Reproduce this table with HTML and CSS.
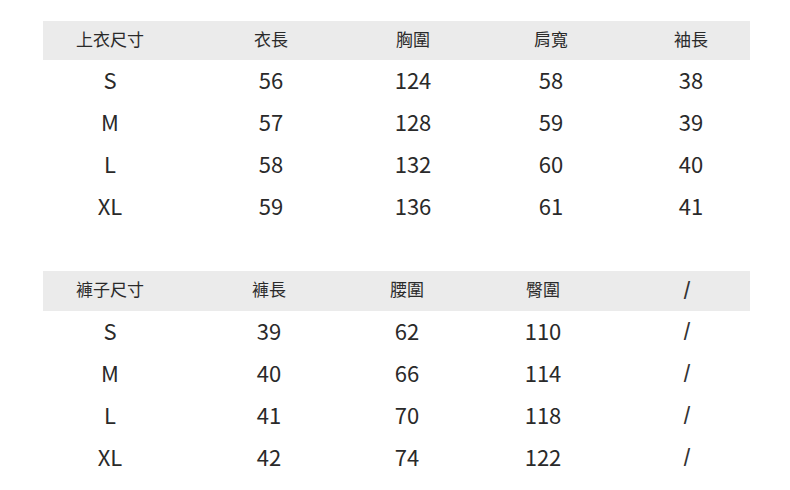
FILE: index.html
```html
<!DOCTYPE html>
<html lang="zh-Hant">
<head>
<meta charset="utf-8">
<title>尺寸表</title>
<link rel="stylesheet" href="styles.css">
</head>
<body>
<div class="page">
  <div class="table top">
    <div class="row head">
      <div>上衣尺寸</div><div>衣長</div><div>胸圍</div><div>肩寬</div><div>袖長</div>
    </div>
    <div class="row"><div>S</div><div>56</div><div>124</div><div>58</div><div>38</div></div>
    <div class="row"><div>M</div><div>57</div><div>128</div><div>59</div><div>39</div></div>
    <div class="row"><div>L</div><div>58</div><div>132</div><div>60</div><div>40</div></div>
    <div class="row"><div>XL</div><div>59</div><div>136</div><div>61</div><div>41</div></div>
  </div>
  <div class="table bottom">
    <div class="row head">
      <div>褲子尺寸</div><div>褲長</div><div>腰圍</div><div>臀圍</div><div class="slash">/</div>
    </div>
    <div class="row"><div>S</div><div>39</div><div>62</div><div>110</div><div class="slash">/</div></div>
    <div class="row"><div>M</div><div>40</div><div>66</div><div>114</div><div class="slash">/</div></div>
    <div class="row"><div>L</div><div>41</div><div>70</div><div>118</div><div class="slash">/</div></div>
    <div class="row"><div>XL</div><div>42</div><div>74</div><div>122</div><div class="slash">/</div></div>
  </div>
</div>
</body>
</html>
```
FILE: styles.css
```css
html, body {
  margin: 0;
  padding: 0;
  background: #ffffff;
}
body {
  font-family: "Noto Sans CJK TC", "Noto Sans", sans-serif;
  color: #2a2a2a;
}
.page {
  width: 707px;
  padding: 21px 0 0 43px;
  display: flex;
  flex-direction: column;
  gap: 43px;
}
.table {
  display: flex;
  flex-direction: column;
}
.row {
  display: grid;
  box-sizing: border-box;
  height: 42px;
  padding-bottom: 4px;
  align-items: center;
  justify-items: center;
  font-size: 22px;
  font-weight: 400;
}
.top .row {
  grid-template-columns: 134px 188px 96px 180px 100px;
}
.bottom .row {
  grid-template-columns: 134px 184px 92px 180px 108px;
}
.row.head {
  height: 39px;
  padding-bottom: 5px;
  background: #ebebeb;
  font-size: 17px;
}
.bottom .row.head {
  height: 40px;
}
.slash {
  font-family: "Liberation Sans", sans-serif;
  font-size: 23px;
  margin-top: 5px;
  color: #333333;
}
.row.head .slash {
  font-size: 23px;
}
```
